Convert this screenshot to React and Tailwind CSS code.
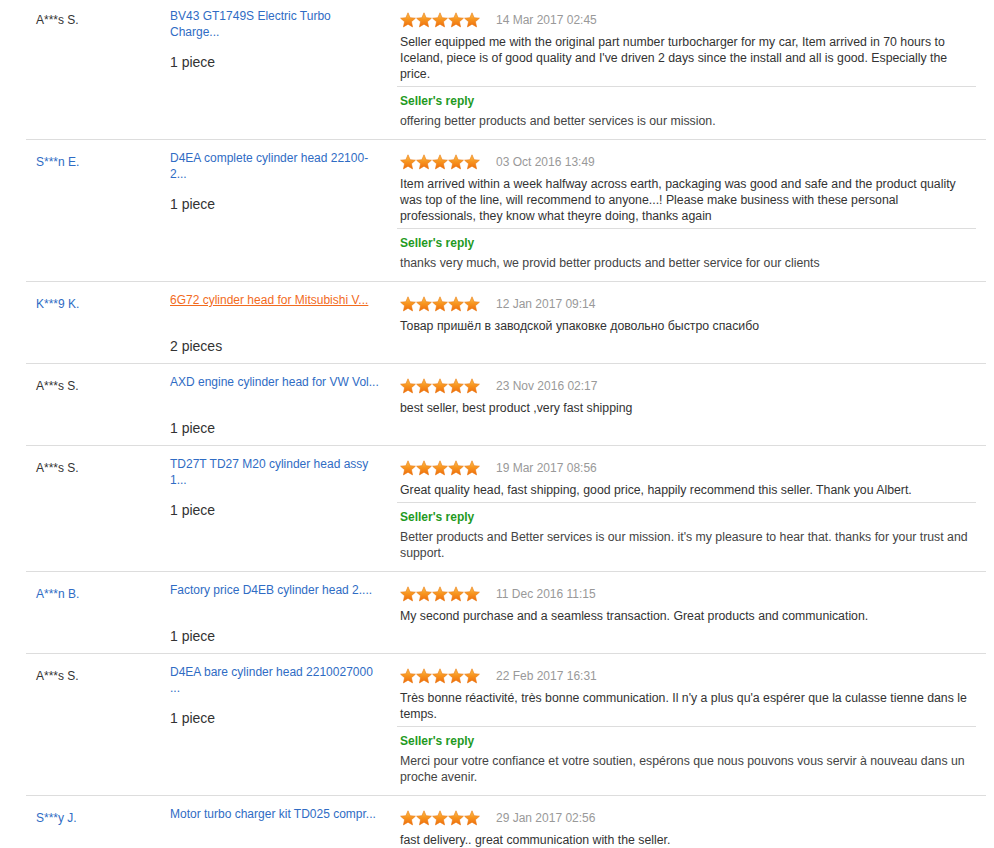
import React from 'react';

const reviews = [
  {
    name: 'A***s S.',
    blue: false,
    title: ['BV43 GT1749S Electric Turbo', 'Charge...'],
    qty: '1 piece',
    date: '14 Mar 2017 02:45',
    text: "Seller equipped me with the original part number turbocharger for my car, Item arrived in 70 hours to Iceland, piece is of good quality and I've driven 2 days since the install and all is good. Especially the price.",
    reply: 'offering better products and better services is our mission.',
  },
  {
    name: 'S***n E.',
    blue: true,
    title: ['D4EA complete cylinder head 22100-', '2...'],
    qty: '1 piece',
    date: '03 Oct 2016 13:49',
    text: 'Item arrived within a week halfway across earth, packaging was good and safe and the product quality was top of the line, will recommend to anyone...! Please make business with these personal professionals, they know what theyre doing, thanks again',
    reply: 'thanks very much, we provid better products and better service for our clients',
  },
  {
    name: 'K***9 K.',
    blue: true,
    hover: true,
    title: ['6G72 cylinder head for Mitsubishi V...'],
    qty: '2 pieces',
    date: '12 Jan 2017 09:14',
    text: 'Товар пришёл в заводской упаковке довольно быстро спасибо',
  },
  {
    name: 'A***s S.',
    blue: false,
    title: ['AXD engine cylinder head for VW Vol...'],
    qty: '1 piece',
    date: '23 Nov 2016 02:17',
    text: 'best seller, best product ,very fast shipping',
  },
  {
    name: 'A***s S.',
    blue: false,
    title: ['TD27T TD27 M20 cylinder head assy', '1...'],
    qty: '1 piece',
    date: '19 Mar 2017 08:56',
    text: 'Great quality head, fast shipping, good price, happily recommend this seller. Thank you Albert.',
    reply: "Better products and Better services is our mission. it's my pleasure to hear that. thanks for your trust and support.",
  },
  {
    name: 'A***n B.',
    blue: true,
    title: ['Factory price D4EB cylinder head 2....'],
    qty: '1 piece',
    date: '11 Dec 2016 11:15',
    text: 'My second purchase and a seamless transaction. Great products and communication.',
  },
  {
    name: 'A***s S.',
    blue: false,
    title: ['D4EA bare cylinder head 2210027000', '...'],
    qty: '1 piece',
    date: '22 Feb 2017 16:31',
    text: "Très bonne réactivité, très bonne communication. Il n'y a plus qu'a espérer que la culasse tienne dans le temps.",
    reply: 'Merci pour votre confiance et votre soutien, espérons que nous pouvons vous servir à nouveau dans un proche avenir.',
  },
  {
    name: 'S***y J.',
    blue: true,
    title: ['Motor turbo charger kit TD025 compr...'],
    qty: '1 piece',
    date: '29 Jan 2017 02:56',
    text: 'fast delivery.. great communication with the seller.',
    last: true,
  },
];

function Star() {
  return (
    <svg width="16" height="16" viewBox="0 0 16 16">
      <defs>
        <linearGradient id="sg" x1="0" y1="0" x2="0" y2="1">
          <stop offset="0" stopColor="#fcc14f" />
          <stop offset="0.5" stopColor="#f7931e" />
          <stop offset="1" stopColor="#ee6c0c" />
        </linearGradient>
      </defs>
      <path
        d="M8 0.8 L10.12 5.69 L15.42 6.19 L11.42 9.71 L12.58 14.91 L8 12.2 L3.42 14.91 L4.58 9.71 L0.58 6.19 L5.88 5.69 Z"
        fill="url(#sg)"
        stroke="#e9770f"
        strokeWidth="0.6"
        strokeLinejoin="round"
      />
    </svg>
  );
}

function Row({ r, first }) {
  return (
    <div className={`flex border-b border-[#dddddd] ${first ? '-mt-[2px]' : ''}`}>
      <div
        className={`w-[144px] shrink-0 pl-[10px] pt-[14px] text-[12px] leading-[16px] ${
          r.blue ? 'text-[#2f6cc4]' : 'text-[#333333]'
        }`}
      >
        {r.name}
      </div>
      <div className="w-[227px] shrink-0 pt-[10px] pb-[8px]">
        <div className="h-[32px] text-[12px] leading-[16px]">
          {r.title.map((t, i) => (
            <div
              key={i}
              className={`whitespace-nowrap ${r.hover ? 'text-[#f26b1d] underline' : 'text-[#2f6cc4]'}`}
            >
              {t}
            </div>
          ))}
        </div>
        <div className="mt-[13px] text-[14px] leading-[18px] text-[#333333]">{r.qty}</div>
      </div>
      <div className="w-[579px] shrink-0 pt-[14px] pb-[10px]">
        <div className="flex h-[16px] items-center pl-[3px]">
          <div className="flex">
            <Star />
            <Star />
            <Star />
            <Star />
            <Star />
          </div>
          <span className="ml-[16px] text-[12px] text-[#999999]">{r.date}</span>
        </div>
        <p className="mt-[6px] pl-[3px] pr-[3px] text-[12.3px] leading-[16px] text-[#333333]">{r.text}</p>
        {r.reply && (
          <div className="mt-[4px] border-t border-[#dddddd] pt-[6px] pl-[3px] pr-[3px]">
            <div className="text-[12px] font-bold leading-[16px] text-[#1f9a1f]">Seller's reply</div>
            <p className="mt-[4px] text-[12.3px] leading-[16px] text-[#444444]">{r.reply}</p>
          </div>
        )}
        {r.last && (
          <div className="mt-[1px] flex justify-end">
            <div className="mr-[-9px] w-[155px] border-t border-[#dddddd]" />
          </div>
        )}
      </div>
    </div>
  );
}

export default function App() {
  return (
    <div className="min-h-screen bg-white font-['Liberation_Sans',Arial,sans-serif]">
      <div className="ml-[26px] w-[960px]">
        {reviews.map((r, i) => (
          <Row key={i} r={r} first={i === 0} />
        ))}
      </div>
    </div>
  );
}
